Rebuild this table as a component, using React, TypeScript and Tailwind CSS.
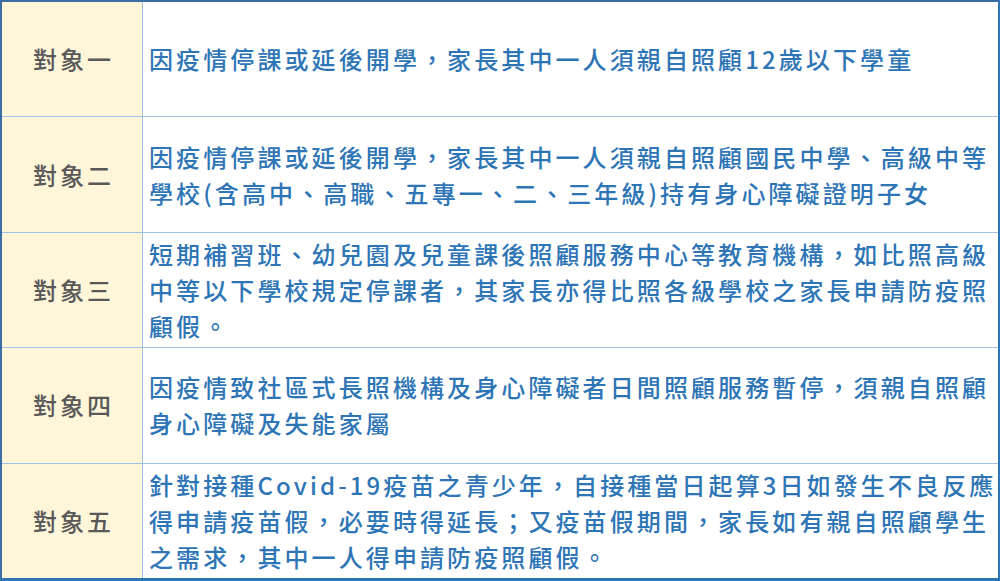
import React from "react";

const rows: { label: string; lines: string[] }[] = [
  { label: "對象一", lines: ["因疫情停課或延後開學，家長其中一人須親自照顧12歲以下學童"] },
  {
    label: "對象二",
    lines: [
      "因疫情停課或延後開學，家長其中一人須親自照顧國民中學、高級中等",
      "學校(含高中、高職、五專一、二、三年級)持有身心障礙證明子女",
    ],
  },
  {
    label: "對象三",
    lines: [
      "短期補習班、幼兒園及兒童課後照顧服務中心等教育機構，如比照高級",
      "中等以下學校規定停課者，其家長亦得比照各級學校之家長申請防疫照",
      "顧假。",
    ],
  },
  {
    label: "對象四",
    lines: [
      "因疫情致社區式長照機構及身心障礙者日間照顧服務暫停，須親自照顧",
      "身心障礙及失能家屬",
    ],
  },
  {
    label: "對象五",
    lines: [
      "針對接種Covid-19疫苗之青少年，自接種當日起算3日如發生不良反應",
      "得申請疫苗假，必要時得延長；又疫苗假期間，家長如有親自照顧學生",
      "之需求，其中一人得申請防疫照顧假。",
    ],
  },
];

export default function App() {
  return (
    <div
      lang="zh-TW"
      className="w-[1002px] h-[581px] bg-white overflow-hidden"
      style={{ fontFamily: '"Noto Sans CJK TC", "Noto Sans", sans-serif' }}
    >
      <div className="w-[1000px] h-[581px] flex flex-col border-t-2 border-l-2 border-r-2 border-b-[3px] border-t-[#3b6ea6] border-l-[#3b6ea6] border-r-[#2e75b6] border-b-[#2e75b6]">
        {rows.map((r, i) => (
          <div
            key={r.label}
            className={
              "flex flex-1 min-h-0 " + (i < rows.length - 1 ? "border-b border-[#9dc3e6]" : "")
            }
          >
            <div className="w-[141px] shrink-0 bg-[#fff5d9] border-r border-[#9dc3e6] flex items-center justify-center text-[24px] leading-[36px] tracking-[3px] font-medium text-[#595959] pl-[3px]">
              {r.label}
            </div>
            <div className="flex-1 flex flex-col justify-center pl-[6px] text-[24px] leading-[36px] tracking-[3.1px] font-medium text-[#2e75b6]">
              {r.lines.map((l) => (
                <div key={l} className="whitespace-nowrap">
                  {l}
                </div>
              ))}
            </div>
          </div>
        ))}
      </div>
    </div>
  );
}
